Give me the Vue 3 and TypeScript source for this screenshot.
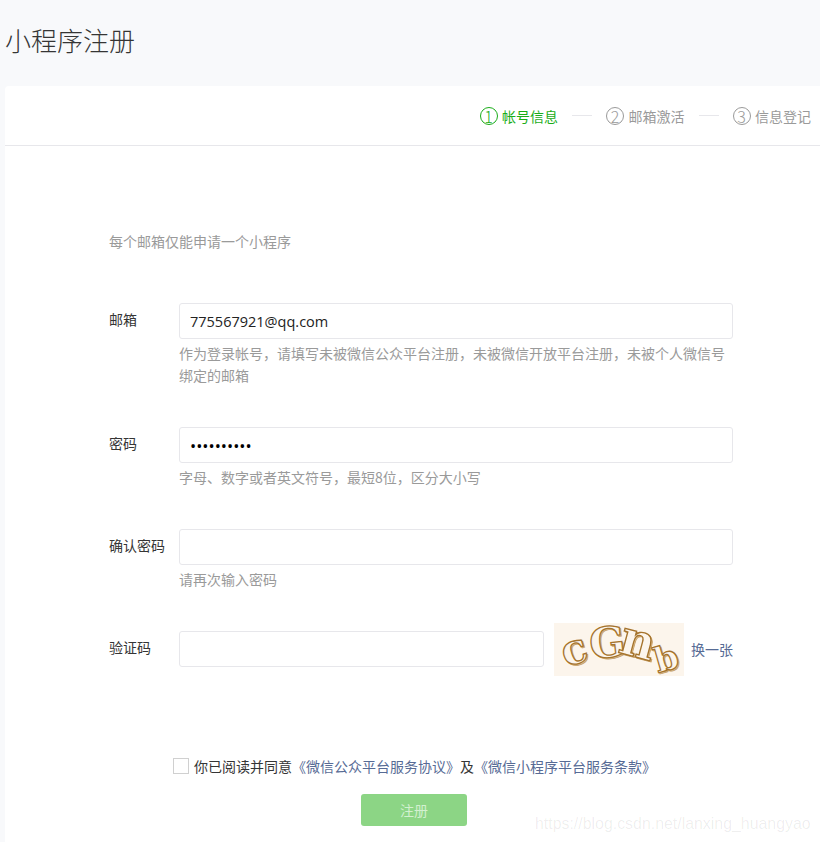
<template>
  <div class="page">
    <h1 class="page-title">小程序注册</h1>
    <div class="card">
      <div class="card-head">
        <template v-for="(step, i) in steps" :key="step.name">
          <span v-if="i > 0" class="step-line"></span>
          <div class="step" :class="{ current: i === 0 }">
            <span class="step-num">{{ i + 1 }}</span>
            <span>{{ step.name }}</span>
          </div>
        </template>
      </div>

      <div class="card-body">
        <p class="intro">每个邮箱仅能申请一个小程序</p>

        <div class="field field-email">
          <label class="field-label">邮箱</label>
          <div class="field-main">
            <input class="input" type="text" value="775567921@qq.com" />
            <p class="hint">作为登录帐号，请填写未被微信公众平台注册，未被微信开放平台注册，未被个人微信号绑定的邮箱</p>
          </div>
        </div>

        <div class="field field-pass">
          <label class="field-label">密码</label>
          <div class="field-main">
            <input class="input input-pass" type="password" value="1234567890" />
            <p class="hint">字母、数字或者英文符号，最短8位，区分大小写</p>
          </div>
        </div>

        <div class="field field-confirm">
          <label class="field-label">确认密码</label>
          <div class="field-main">
            <input class="input" type="password" />
            <p class="hint">请再次输入密码</p>
          </div>
        </div>

        <div class="field field-code">
          <label class="field-label">验证码</label>
          <div class="field-main code-row">
            <input class="input code-input" type="text" />
            <svg class="captcha" width="130" height="53" viewBox="0 0 130 53">
              <rect width="130" height="53" fill="#fcf5ec" />
              <g class="captcha-shade" transform="translate(1.2 1.2)">
                <text v-for="c in captcha" :key="c.ch" :transform="c.tf" :font-size="c.size">{{ c.ch }}</text>
              </g>
              <g class="captcha-text">
                <text v-for="c in captcha" :key="c.ch" :transform="c.tf" :font-size="c.size">{{ c.ch }}</text>
              </g>
            </svg>
            <a class="link refresh">换一张</a>
          </div>
        </div>

        <div class="agree">
          <span class="checkbox"></span>
          <span>你已阅读并同意</span>
          <a class="link">《微信公众平台服务协议》</a>
          <span>及</span>
          <a class="link">《微信小程序平台服务条款》</a>
        </div>

        <div class="actions">
          <button class="submit" type="button">注册</button>
        </div>
      </div>
    </div>
    <div class="watermark">https://blog.csdn.net/lanxing_huangyao</div>
  </div>
</template>

<script setup lang="ts">
interface Step {
  name: string
}

interface CaptchaChar {
  ch: string
  size: number
  tf: string
}

const steps: Step[] = [
  { name: '帐号信息' },
  { name: '邮箱激活' },
  { name: '信息登记' }
]

const captcha: CaptchaChar[] = [
  { ch: 'c', size: 42, tf: 'translate(12 44) rotate(-18)' },
  { ch: 'G', size: 42, tf: 'translate(37 36) rotate(-6)' },
  { ch: 'n', size: 46, tf: 'translate(63 29) rotate(15) scale(1.05 1.05)' },
  { ch: 'b', size: 34, tf: 'translate(104 50) rotate(-16)' }
]
</script>

<style>
html,
body {
  margin: 0;
  background: #ffffff;
}
</style>

<style scoped>
.page {
  position: relative;
  width: 820px;
  height: 842px;
  overflow: hidden;
  background: #f8f9fb;
  font-family: "Noto Sans CJK SC", "Noto Sans", sans-serif;
  font-size: 14px;
  color: #353535;
}

.page-title {
  margin: 0;
  padding: 22px 0 0 5px;
  height: 86px;
  box-sizing: border-box;
  font-size: 26px;
  line-height: 36px;
  font-weight: 300;
}

.card {
  margin-left: 5px;
  height: 756px;
  background: #fff;
  border-radius: 4px 0 0 0;
}

.card-head {
  display: flex;
  align-items: center;
  justify-content: flex-end;
  gap: 14px;
  height: 60px;
  padding-right: 9px;
  box-sizing: border-box;
  border-bottom: 1px solid #e7e7eb;
  color: #9a9a9a;
}

.step {
  display: flex;
  align-items: center;
  gap: 4.5px;
  line-height: 20px;
}

.step.current {
  color: #1aad19;
}

.step-num {
  width: 18px;
  height: 18px;
  box-sizing: border-box;
  border: 1px solid currentColor;
  border-radius: 50%;
  display: flex;
  align-items: center;
  justify-content: center;
  font-size: 16px;
  font-weight: 300;
}

.step-line {
  width: 20px;
  height: 1px;
  background: #e7e7eb;
}

.card-body {
  padding: 84px 87px 0 104px;
}

.intro {
  margin: 0;
  line-height: 22px;
  color: #9a9a9a;
}

.field {
  display: flex;
}

.field-email {
  margin-top: 51px;
}

.field-pass {
  margin-top: 40px;
}

.field-confirm {
  margin-top: 40px;
}

.field-code {
  margin-top: 40px;
}

.field-label {
  width: 70px;
  flex: none;
  line-height: 33px;
}

.field-main {
  flex: 1;
  min-width: 0;
}

.input {
  display: block;
  width: 100%;
  height: 36px;
  box-sizing: border-box;
  padding: 0 10px;
  border: 1px solid #e7e7eb;
  border-radius: 3px;
  outline: none;
  background: #fff;
  font-family: "Open Sans", "Noto Sans CJK SC", sans-serif;
  font-size: 14.5px;
  color: #222;
}

.input-pass {
  font-size: 16.4px;
  color: #000;
}

.hint {
  margin: 3px 0 1px;
  line-height: 22px;
  color: #9a9a9a;
}

.code-row {
  display: flex;
  align-items: center;
  height: 36px;
}

.code-input {
  width: 365px;
  flex: none;
}

.captcha {
  flex: none;
  margin: 0 0 0 10px;
  overflow: visible;
}

.captcha-text text,
.captcha-shade text {
  font-family: "DejaVu Serif", serif;
  font-weight: 700;
}

.captcha-shade text {
  fill: #e2c79c;
  stroke: #c79e63;
  stroke-width: 0.8;
}

.captcha-text text {
  fill: #fcf5ec;
  stroke: #a5732c;
  stroke-width: 1.3;
}

.link {
  color: #576b95;
}

.refresh {
  margin: 0 0 0 auto;
}

.agree {
  display: flex;
  align-items: center;
  margin-top: 90px;
  padding-left: 64px;
  height: 18px;
  white-space: nowrap;
}

.checkbox {
  width: 16px;
  height: 16px;
  margin-right: 5px;
  border: 1px solid #d0d0d0;
  box-sizing: border-box;
  background: #fff;
}

.actions {
  display: flex;
  justify-content: center;
  margin-top: 19px;
  padding-right: 14px;
}

.submit {
  width: 106px;
  height: 32px;
  border: 0;
  border-radius: 3px;
  background: #8cd585;
  color: #d3f0d0;
  font-family: inherit;
  font-size: 14px;
  padding: 0;
}

.watermark {
  position: absolute;
  left: 535px;
  top: 814px;
  font-family: "Liberation Sans", sans-serif;
  font-size: 15.9px;
  line-height: 20px;
  color: rgba(0, 0, 0, 0.07);
  white-space: nowrap;
}
</style>
